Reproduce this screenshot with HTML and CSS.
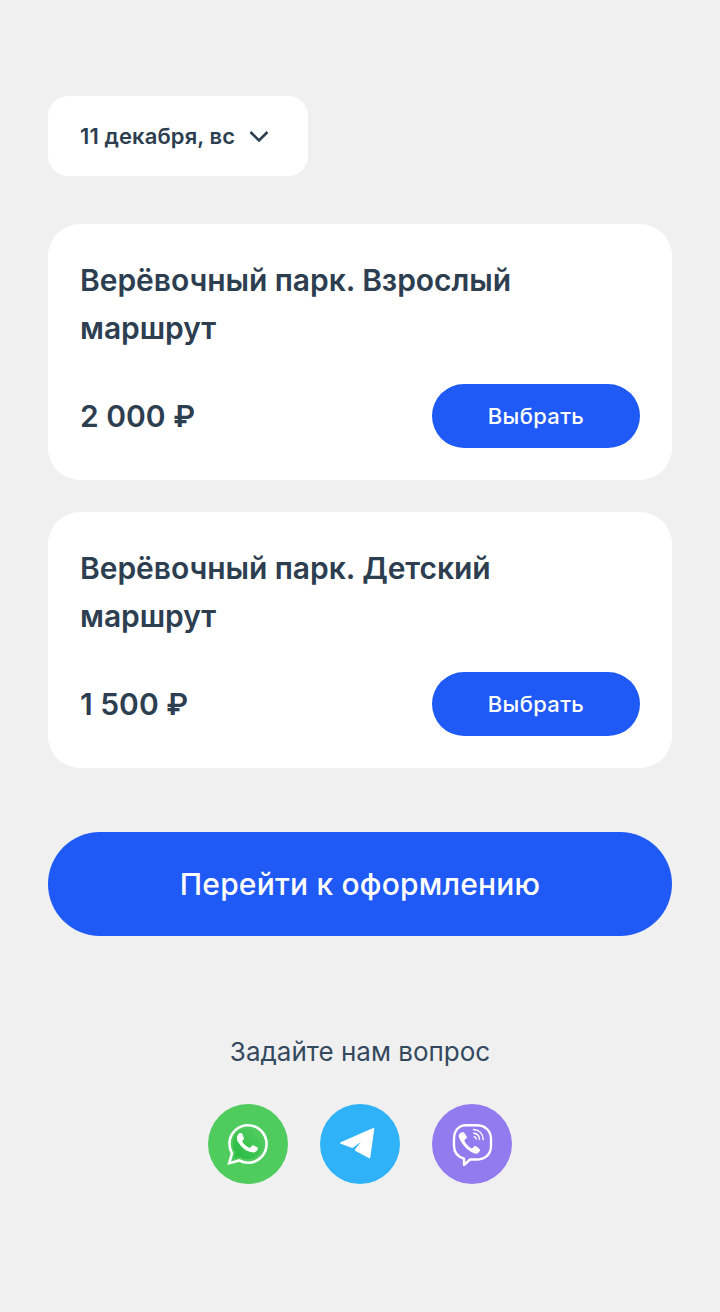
FILE: index.html
```html
<!DOCTYPE html>
<html lang="ru">
<head>
<meta charset="utf-8">
<title>Выбор билета</title>
<link rel="stylesheet" href="styles.css">
</head>
<body>
<main class="page">
  <button class="date"><span>11 декабря, вс</span>
    <svg class="chev" width="24" height="24" viewBox="0 0 24 24"><path d="M3.5 8 L12 16.5 L20.5 8" fill="none" stroke="#2c3e50" stroke-width="2.6"/></svg>
  </button>
  <section class="cards">
    <article class="card">
      <h2 class="title">Верёвочный парк. Взрослый маршрут</h2>
      <div class="row"><span class="price">2 000 ₽</span><button class="pick">Выбрать</button></div>
    </article>
    <article class="card">
      <h2 class="title">Верёвочный парк. Детский маршрут</h2>
      <div class="row"><span class="price">1 500 ₽</span><button class="pick">Выбрать</button></div>
    </article>
  </section>
  <button class="go">Перейти к оформлению</button>
  <p class="ask">Задайте нам вопрос</p>
  <div class="social">
    <a class="soc wa"><svg width="44" height="44" viewBox="0 0 44 44">
      <defs><linearGradient id="wag" x1="0" y1="1" x2="1" y2="0"><stop offset="0.2" stop-color="#2fbe47"/><stop offset="0.85" stop-color="#50cc5f"/></linearGradient></defs>
      <path d="M22 6.500c-8.500 0-15.300 6.900-15.300 15.300 0 3.200 1 6.200 2.700 8.700l-1.600 5.800 6-1.600c2.400 1.600 5.200 2.400 8.200 2.400 8.500 0 15.300-6.900 15.300-15.300S30.500 6.500 22 6.500z" fill="url(#wag)"/>
      <path d="M22 3.200C11.700 3.200 3.400 11.500 3.400 21.800c0 3.400.9 6.600 2.600 9.500L3.200 41.200l10.200-2.700c2.700 1.500 5.600 2.200 8.600 2.200 10.300 0 18.600-8.400 18.600-18.700S32.300 3.200 22 3.200z" fill="none" stroke="#fff" stroke-width="2.600"/>
      <path d="M16.300 11.900c-.4-.9-.8-.9-1.200-.9h-1c-.4 0-.9.100-1.400.7-.5.500-1.800 1.800-1.800 4.300s1.800 5 2.100 5.300c.3.400 3.600 5.700 8.800 7.800 4.300 1.700 5.200 1.400 6.200 1.300.9-.1 3-1.200 3.400-2.400.4-1.200.4-2.200.3-2.400-.1-.2-.5-.4-1-.6-.5-.3-3-1.500-3.500-1.700-.5-.2-.8-.3-1.100.3-.3.500-1.300 1.700-1.600 2-.3.300-.6.400-1.100.100-.5-.3-2.200-.8-4.100-2.500-1.500-1.400-2.600-3-2.900-3.500-.3-.5 0-.8.200-1.100.2-.2.500-.6.800-.9.300-.3.300-.5.500-.9.200-.3.100-.7 0-.9-.2-.3-1.100-2.800-1.600-4z" fill="#fff"/>
    </svg></a>
    <a class="soc tg"><svg width="44" height="44" viewBox="0 0 44 44">
      <path d="M3 21 L35.500 6.800 L31.500 35.500 L17.500 28 L27.500 15.500 L14.500 25.200 Z" fill="#fff" stroke="#fff" stroke-width="1.600" stroke-linejoin="round"/>
    </svg></a>
    <a class="soc vb"><svg width="44" height="44" viewBox="0 0 44 44">
      <path d="M16 3.200h10c9.500 0 15 5.500 15 14v6.500c0 8.500-5.500 13.800-15 13.800h-6l-6 5.500v-6.300C7.500 34.500 4 30 4 23.700v-6.500c0-8.500 4.500-14 12-14z" fill="none" stroke="#fff" stroke-width="2.400" stroke-linejoin="round"/>
      <path d="M12.300 10.300c-.8 0-1.600.5-2.500 1.300-1.100 1-1.500 2.300-.8 4 1.600 4.100 4.100 7.700 7 10.500 2.600 2.500 5.500 4.300 8.800 5.400 1.600.5 2.800.2 3.800-1 1-1.100 1.600-2.100 1.300-3.100-.2-.7-3.500-3.300-4.500-3.500-1-.2-2 1.200-2.800 2-.5.400-1.100.3-1.700 0-2.500-1.300-5-4-6.300-6.700-.3-.6-.2-1.200.3-1.600.8-.7 2.100-1.700 1.900-2.700-.2-1-2.700-4.500-3.400-4.600-.4-.1-.7-.1-1.100 0z" fill="#fff"/>
      <path d="M23.500 7.500c5.700.3 9.500 4.200 9.700 10M23.800 11.200c3.400.3 5.500 2.500 5.700 6M24.200 14.800c1.300.2 1.900.9 2 2.200" fill="none" stroke="#fff" stroke-width="1.500" stroke-linecap="round"/>
    </svg></a>
  </div>
</main>
</body>
</html>
```

FILE: styles.css
```css
* { box-sizing: border-box; }
html, body { margin: 0; padding: 0; }
body {
  background: #f0f0f0;
  color: #2c3e50;
  font-family: "Inter", "Noto Sans", sans-serif;
  height: 1312px;
}
button { font-family: inherit; border: 0; cursor: pointer; }
.page { padding: 96px 48px 0; display: flex; flex-direction: column; align-items: stretch; }
.date {
  width: 260px; height: 80px; background: #fff; border-radius: 20px;
  display: flex; align-items: center; gap: 12px; padding: 0 32px;
  color: #2c3e50; font-size: 22px; font-weight: 600; letter-spacing: 0.1px; white-space: nowrap;
}
.chev { flex: none; }
.cards { display: flex; flex-direction: column; gap: 32px; margin-top: 48px; }
.card { background: #fff; border-radius: 32px; padding: 32px; }
.title { margin: 0 0 32px; max-width: 500px; font-size: 30px; line-height: 48px; font-weight: 600; letter-spacing: -0.05px; }
.row { display: flex; justify-content: space-between; align-items: center; }
.price { font-size: 30px; font-weight: 600; }
.pick {
  width: 208px; height: 64px; border-radius: 32px; background: #1f5af6;
  color: #fff; font-size: 22px; font-weight: 500; letter-spacing: 0.35px;
}
.go {
  margin-top: 64px; height: 104px; border-radius: 52px; background: #1f5af6;
  color: #fff; font-size: 30px; font-weight: 500; letter-spacing: 0.2px;
}
.ask { margin: 96px 0 0; text-align: center; font-size: 26px; line-height: 40px; color: #34495e; }
.social { display: flex; justify-content: center; gap: 32px; margin-top: 32px; }
.soc { width: 80px; height: 80px; border-radius: 50%; display: flex; align-items: center; justify-content: center; }
.wa { background: #50cc5f; }
.tg { background: #2fb2f8; }
.vb { background: #917bee; }
```
